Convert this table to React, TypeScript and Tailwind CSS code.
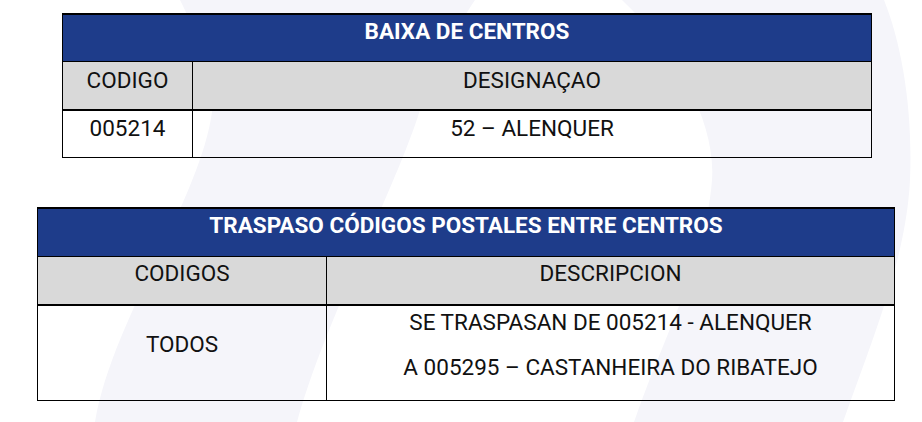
const BLUE = "bg-[#1e3c8a]";

function Watermark() {
  return (
    <svg
      className="pointer-events-none absolute inset-0"
      width="922"
      height="422"
      viewBox="0 0 922 422"
    >
      <path
        d="M180 0 C200 40 215 80 212 112 C200 200 112 320 95 422 L297 422 C325 320 395 190 420 110 C440 60 458 25 475 0 Z"
        fill="#f5f5fa"
      />
      <path
        d="M622 0 C680 55 716 125 712 180 C706 260 662 340 634 422 L843 422 C872 340 906 260 910 180 C913 110 902 45 884 0 Z"
        fill="#f5f5fa"
      />
    </svg>
  );
}

export default function App() {
  return (
    <div
      className="relative h-[422px] w-[922px] overflow-hidden bg-white text-[22.5px] leading-[24px] text-[#111]"
      style={{ fontFamily: "Roboto, 'Liberation Sans', sans-serif" }}
    >
      <Watermark />
      <div className="relative pt-[13px]">
        {/* baixa de centros */}
        <div className="ml-[62px] w-[810px] border-x border-t-2 border-b border-black">
          <div className={`${BLUE} h-[47px] border-b border-black pt-[4px] text-center font-bold text-white`}>
            BAIXA DE CENTROS
          </div>
          <div className="grid h-[49px] grid-cols-[130px_1fr] border-b-2 border-black bg-[#d9d9d9]">
            <div className="border-r border-black pt-[6px] text-center">CODIGO</div>
            <div className="pt-[6px] text-center">DESIGNAÇAO</div>
          </div>
          <div className="grid h-[46px] grid-cols-[130px_1fr]">
            <div className="border-r border-black pt-[5px] text-center">005214</div>
            <div className="pt-[5px] text-center">52 – ALENQUER</div>
          </div>
        </div>

        {/* traspaso */}
        <div className="ml-[37px] mt-[49px] w-[858px] border-x border-t-2 border-b border-black">
          <div className={`${BLUE} h-[48px] border-b border-black pt-[4px] text-center font-bold text-white`}>
            TRASPASO CÓDIGOS POSTALES ENTRE CENTROS
          </div>
          <div className="grid h-[49px] grid-cols-[289px_1fr] border-b-2 border-black bg-[#d9d9d9]">
            <div className="border-r border-black pt-[4px] text-center">CODIGOS</div>
            <div className="pt-[4px] text-center">DESCRIPCION</div>
          </div>
          <div className="grid h-[94px] grid-cols-[289px_1fr]">
            <div className="border-r border-black pt-[26px] text-center">TODOS</div>
            <div className="pt-[4px] text-center">
              <p>SE TRASPASAN DE 005214 - ALENQUER</p>
              <p className="mt-[21px]">A 005295 – CASTANHEIRA DO RIBATEJO</p>
            </div>
          </div>
        </div>
      </div>
    </div>
  );
}
